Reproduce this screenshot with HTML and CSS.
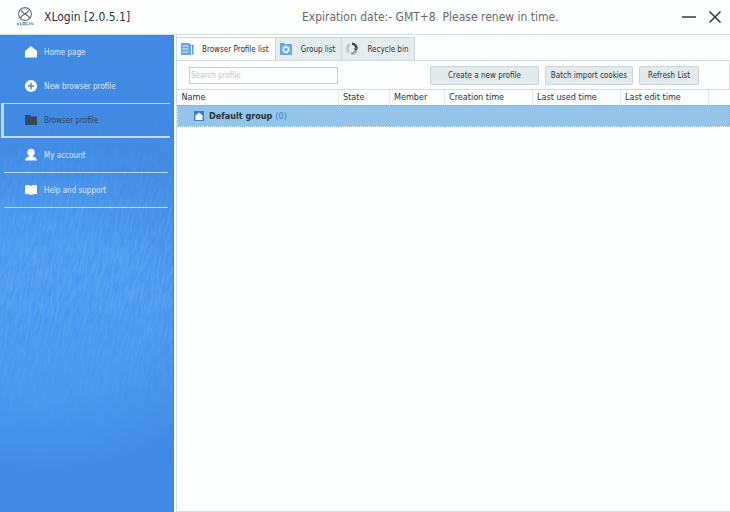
FILE: index.html
```html
<!DOCTYPE html>
<html lang="en">
<head>
<meta charset="utf-8">
<title>XLogin</title>
<link rel="stylesheet" href="styles.css">
</head>
<body>
<div class="app">
  <header class="titlebar">
    <svg class="logo" viewBox="0 0 18 20" aria-hidden="true">
      <circle cx="9" cy="7" r="6.4" fill="#fff" stroke="#66707a" stroke-width="1.1"/>
      <path d="M5 3.200C7 6 7 6 9 7s4 2 4.400 4M13 3.200C11 6 11 6 9 7s-4 2-4.400 4" fill="none" stroke="#66707a" stroke-width="1.300"/>
      <path d="M1 15.600l2 2.400M3 15.600L1 18M4.500 15.500V18H6M7 15.500h2V18H7z" fill="none" stroke="#5c6d7c" stroke-width=".8"/>
      <path d="M10 15.500h2M10 15.500V18h2v-1M13.500 15.500V18M15 18v-2.500L17 18v-2.500" fill="none" stroke="#5d9fd6" stroke-width=".9"/>
    </svg>
    <h1 class="title">XLogin [2.0.5.1]</h1>
    <p class="expiry">Expiration date:- GMT+8&nbsp; Please renew in time.</p>
    <div class="window-controls">
      <button type="button" aria-label="Minimize"><svg viewBox="0 0 14 14"><path d="M0 7h14"/></svg></button>
      <button type="button" aria-label="Close"><svg viewBox="0 0 14 14"><path d="M1.500 1.500l11 11M12.500 1.500l-11 11"/></svg></button>
    </div>
  </header>
  <div class="body">
    <nav class="sidebar">
      <svg class="texture" aria-hidden="true">
        <filter id="streaks" x="0" y="0" width="100%" height="100%">
          <feTurbulence type="fractalNoise" baseFrequency=".6 .06" numOctaves="2" seed="4"/>
          <feColorMatrix values="0 0 0 0 .2  0 0 0 0 .49  0 0 0 0 .86  3 0 0 0 -1.100"/>
        </filter>
        <rect x="-100" y="-60" width="500" height="640" transform="rotate(12)" filter="url(#streaks)"/>
      </svg>
      <a class="item" href="#">
        <svg viewBox="0 0 14 14"><path d="M7 1l6 5v6.500H1V6z" fill="#fff"/></svg>
        <span>Home page</span>
      </a>
      <a class="item" href="#">
        <svg viewBox="0 0 14 14"><circle cx="7" cy="7" r="6" fill="#fff"/><path d="M7 4v6M4 7h6" stroke="#4189e0" stroke-width="1.500"/></svg>
        <span>New browser profile</span>
      </a>
      <a class="item current" href="#" aria-current="page">
        <svg viewBox="0 0 14 14"><path d="M1 2h5l1.500 1.500H13V12H1z" fill="#36485e"/></svg>
        <span>Browser profile</span>
      </a>
      <a class="item ruled" href="#">
        <svg viewBox="0 0 14 14"><circle cx="7" cy="4.500" r="3.700" fill="#fff"/><path d="M5.500 7h3v1.500c3 .5 4 1.500 4.500 4H1c.5-2.500 1.500-3.500 4.500-4z" fill="#fff"/></svg>
        <span>My account</span>
      </a>
      <a class="item ruled" href="#">
        <svg viewBox="0 0 14 14"><path d="M1 2.500c2.500-1 4.500-.7 6 .5 1.500-1.200 3.500-1.500 6-.5V11c-2.500 0-4.500 0-6 1-1.500-1-3.500-1-6-1z" fill="#fff"/></svg>
        <span>Help and support</span>
      </a>
    </nav>
    <main class="main">
      <div class="tabs" role="tablist">
        <button class="tab selected" type="button" role="tab" aria-selected="true">
          <svg viewBox="0 0 14 14"><path d="M1 1h8l2 2v10H1z" fill="#61a8e8"/><path d="M2.500 4h6M2.500 7h6M2.500 10h6" stroke="#e3f2fc"/><path d="M11.500 3.500h1.300V12h-1.300" fill="none" stroke="#3e83c8" stroke-width="1.200"/></svg>
          <span>Browser Profile list</span>
        </button>
        <button class="tab" type="button" role="tab" aria-selected="false">
          <svg viewBox="0 0 14 14"><path d="M1 1h4l1 1h7v11H1z" fill="#65aae6"/><circle cx="7" cy="7.500" r="3" fill="#b3dcf7" stroke="#fff" stroke-width="1.500" stroke-dasharray="2 .6"/><circle cx="7" cy="7.500" r="1.200" fill="#4a93d8"/></svg>
          <span>Group list</span>
        </button>
        <button class="tab" type="button" role="tab" aria-selected="false">
          <svg viewBox="0 0 14 14" fill="none" stroke-width="2.600"><path d="M7 1.800a4.600 4.600 0 0 1 4.500 4.700" stroke="#3f4a57"/><path d="M11 8.500a4.600 4.600 0 0 1-5 2.800" stroke="#9aa5ac"/><path d="M4 10.300a4.600 4.600 0 0 1 1-7.800" stroke="#bcc5c9"/><path d="M8.500 6.500H13L11 9z" fill="#3f4a57" stroke="none"/></svg>
          <span>Recycle bin</span>
        </button>
      </div>
      <div class="toolbar">
        <input class="search" type="text" placeholder="Search profile" aria-label="Search profile">
        <div class="actions">
          <button class="create" type="button">Create a new profile</button>
          <button type="button">Batch import cookies</button>
          <button class="refresh" type="button">Refresh List</button>
        </div>
      </div>
      <table class="profiles">
        <thead>
          <tr><th class="name">Name</th><th class="state">State</th><th class="member">Member</th><th class="date">Creation time</th><th class="date">Last used time</th><th class="date">Last edit time</th><th></th></tr>
        </thead>
        <tbody>
          <tr>
            <td colspan="7">
              <div class="group">
                <svg viewBox="0 0 10 10" aria-hidden="true"><path d="M0 0h10v10H0z" fill="#3d7fca"/><path d="M5 1.500l3.500 3V9h-7V4.500z" fill="#fff"/></svg>
                <strong>Default group</strong> <span class="count">(0)</span>
              </div>
            </td>
          </tr>
        </tbody>
      </table>
    </main>
  </div>
</div>
</body>
</html>
```

FILE: styles.css
```css
* {
  box-sizing: border-box;
}

body {
  margin: 0;
  background: #fdfefe;
  color: #28323c;
  font-family: "DejaVu Sans Condensed", "DejaVu Sans", sans-serif;
  font-size: 8px;
}

button,
input {
  margin: 0;
  color: inherit;
  font: inherit;
}

.app {
  display: flex;
  flex-direction: column;
  min-height: 100vh;
}

.titlebar {
  display: flex;
  align-items: center;
  height: 35px;
  padding: 0 8px 0 16px;
  border-bottom: 1px solid #d5dfe2;
  background: #fdfefe;
}

.logo {
  width: 18px;
  height: 20px;
}

.title {
  width: 258px;
  margin: 0 0 0 10px;
  color: #27333f;
  font-size: 12px;
  font-weight: 400;
}

.expiry {
  margin: 0;
  color: #68696b;
  font-size: 12px;
}

.window-controls {
  display: flex;
  gap: 12px;
  margin-left: auto;
}

.window-controls button {
  width: 14px;
  height: 14px;
  padding: 0;
  border: 0;
  background: none;
}

.window-controls svg {
  display: block;
  fill: none;
  stroke: #2c3842;
  stroke-width: 1.5;
}

.body {
  display: flex;
  flex: 1;
}

.sidebar {
  position: relative;
  flex: 0 0 174px;
  overflow: hidden;
  border-right: 1px solid #4784b8;
  background: #4189e2;
}

.sidebar::before {
  position: absolute;
  inset: 0;
  background: radial-gradient(ellipse 130% 36% at 25% 58%, #4a98f0 50%, #4189e2 100%);
  content: "";
}

.texture {
  position: absolute;
  inset: 0;
  width: 100%;
  height: 100%;
  opacity: 0.35;
  mask-image: linear-gradient(transparent 15%, #000 50%, transparent 85%);
}

.item {
  position: relative;
  display: flex;
  align-items: center;
  gap: 6px;
  height: 34px;
  margin: 0 5px 0 4px;
  padding-left: 20px;
  color: #d5ebfb;
  text-decoration: none;
}

.item svg {
  width: 14px;
  height: 14px;
}

.current {
  height: 35px;
  margin: 0 3px 0 1px;
  border: solid #b9dcf0;
  border-width: 1px 0 2px 3px;
  color: #2d435c;
}

.ruled {
  height: 35px;
  border-bottom: 1px solid #b9dcf0;
}

.main {
  flex: 1;
  min-width: 0;
  margin-left: 2px;
  padding-top: 2px;
  border: solid #d3dcdf;
  border-width: 0 0 1px 1px;
}

.tabs {
  display: flex;
  height: 23px;
}

.tab {
  display: flex;
  align-items: center;
  gap: 8px;
  padding: 0 6px 0 3px;
  border: 1px solid #cbd6d9;
  border-width: 1px 1px 0 0;
  background: #e5eced;
}

.tab svg {
  width: 14px;
  height: 14px;
}

.selected {
  background: #fdfefe;
}

.toolbar {
  display: flex;
  align-items: center;
  justify-content: space-between;
  height: 30px;
  padding: 0 30px 0 12px;
  border: solid #d3dcdf;
  border-width: 1px 1px 1px 0;
}

.search {
  width: 149px;
  height: 17px;
  padding: 0 1px;
  border: 1px solid #c5ced3;
  background: #fdfefe;
}

.search::placeholder {
  color: #bcc6ca;
  opacity: 1;
}

.actions {
  display: flex;
  gap: 6px;
}

.actions button {
  height: 19px;
  padding: 0 5px;
  border: 1px solid #c9d5d8;
  border-radius: 2px;
  background: #e2eaec;
  white-space: nowrap;
}

.actions .create {
  padding: 0 17px;
}

.actions .refresh {
  padding: 0 8px;
}

.profiles {
  width: 100%;
  border-collapse: collapse;
  font-size: 9px;
  table-layout: fixed;
}

.profiles th {
  height: 15px;
  padding: 0 4px;
  border-right: 1px solid #e3e9eb;
  font-weight: 400;
  text-align: left;
  white-space: nowrap;
}

.profiles th:last-child {
  border-right: 0;
}

.name {
  width: 161px;
}

.state {
  width: 51px;
}

.member {
  width: 55px;
}

.date {
  width: 88px;
}

.profiles td {
  height: 21px;
  padding: 0 16px;
  border: 1px dotted #79aeda;
  background: #94c4e9;
}

.group {
  display: flex;
  align-items: center;
}

.group svg {
  width: 10px;
  height: 10px;
  margin-right: 5px;
}

.count {
  margin-left: 3px;
  color: #3679c6;
}
```
